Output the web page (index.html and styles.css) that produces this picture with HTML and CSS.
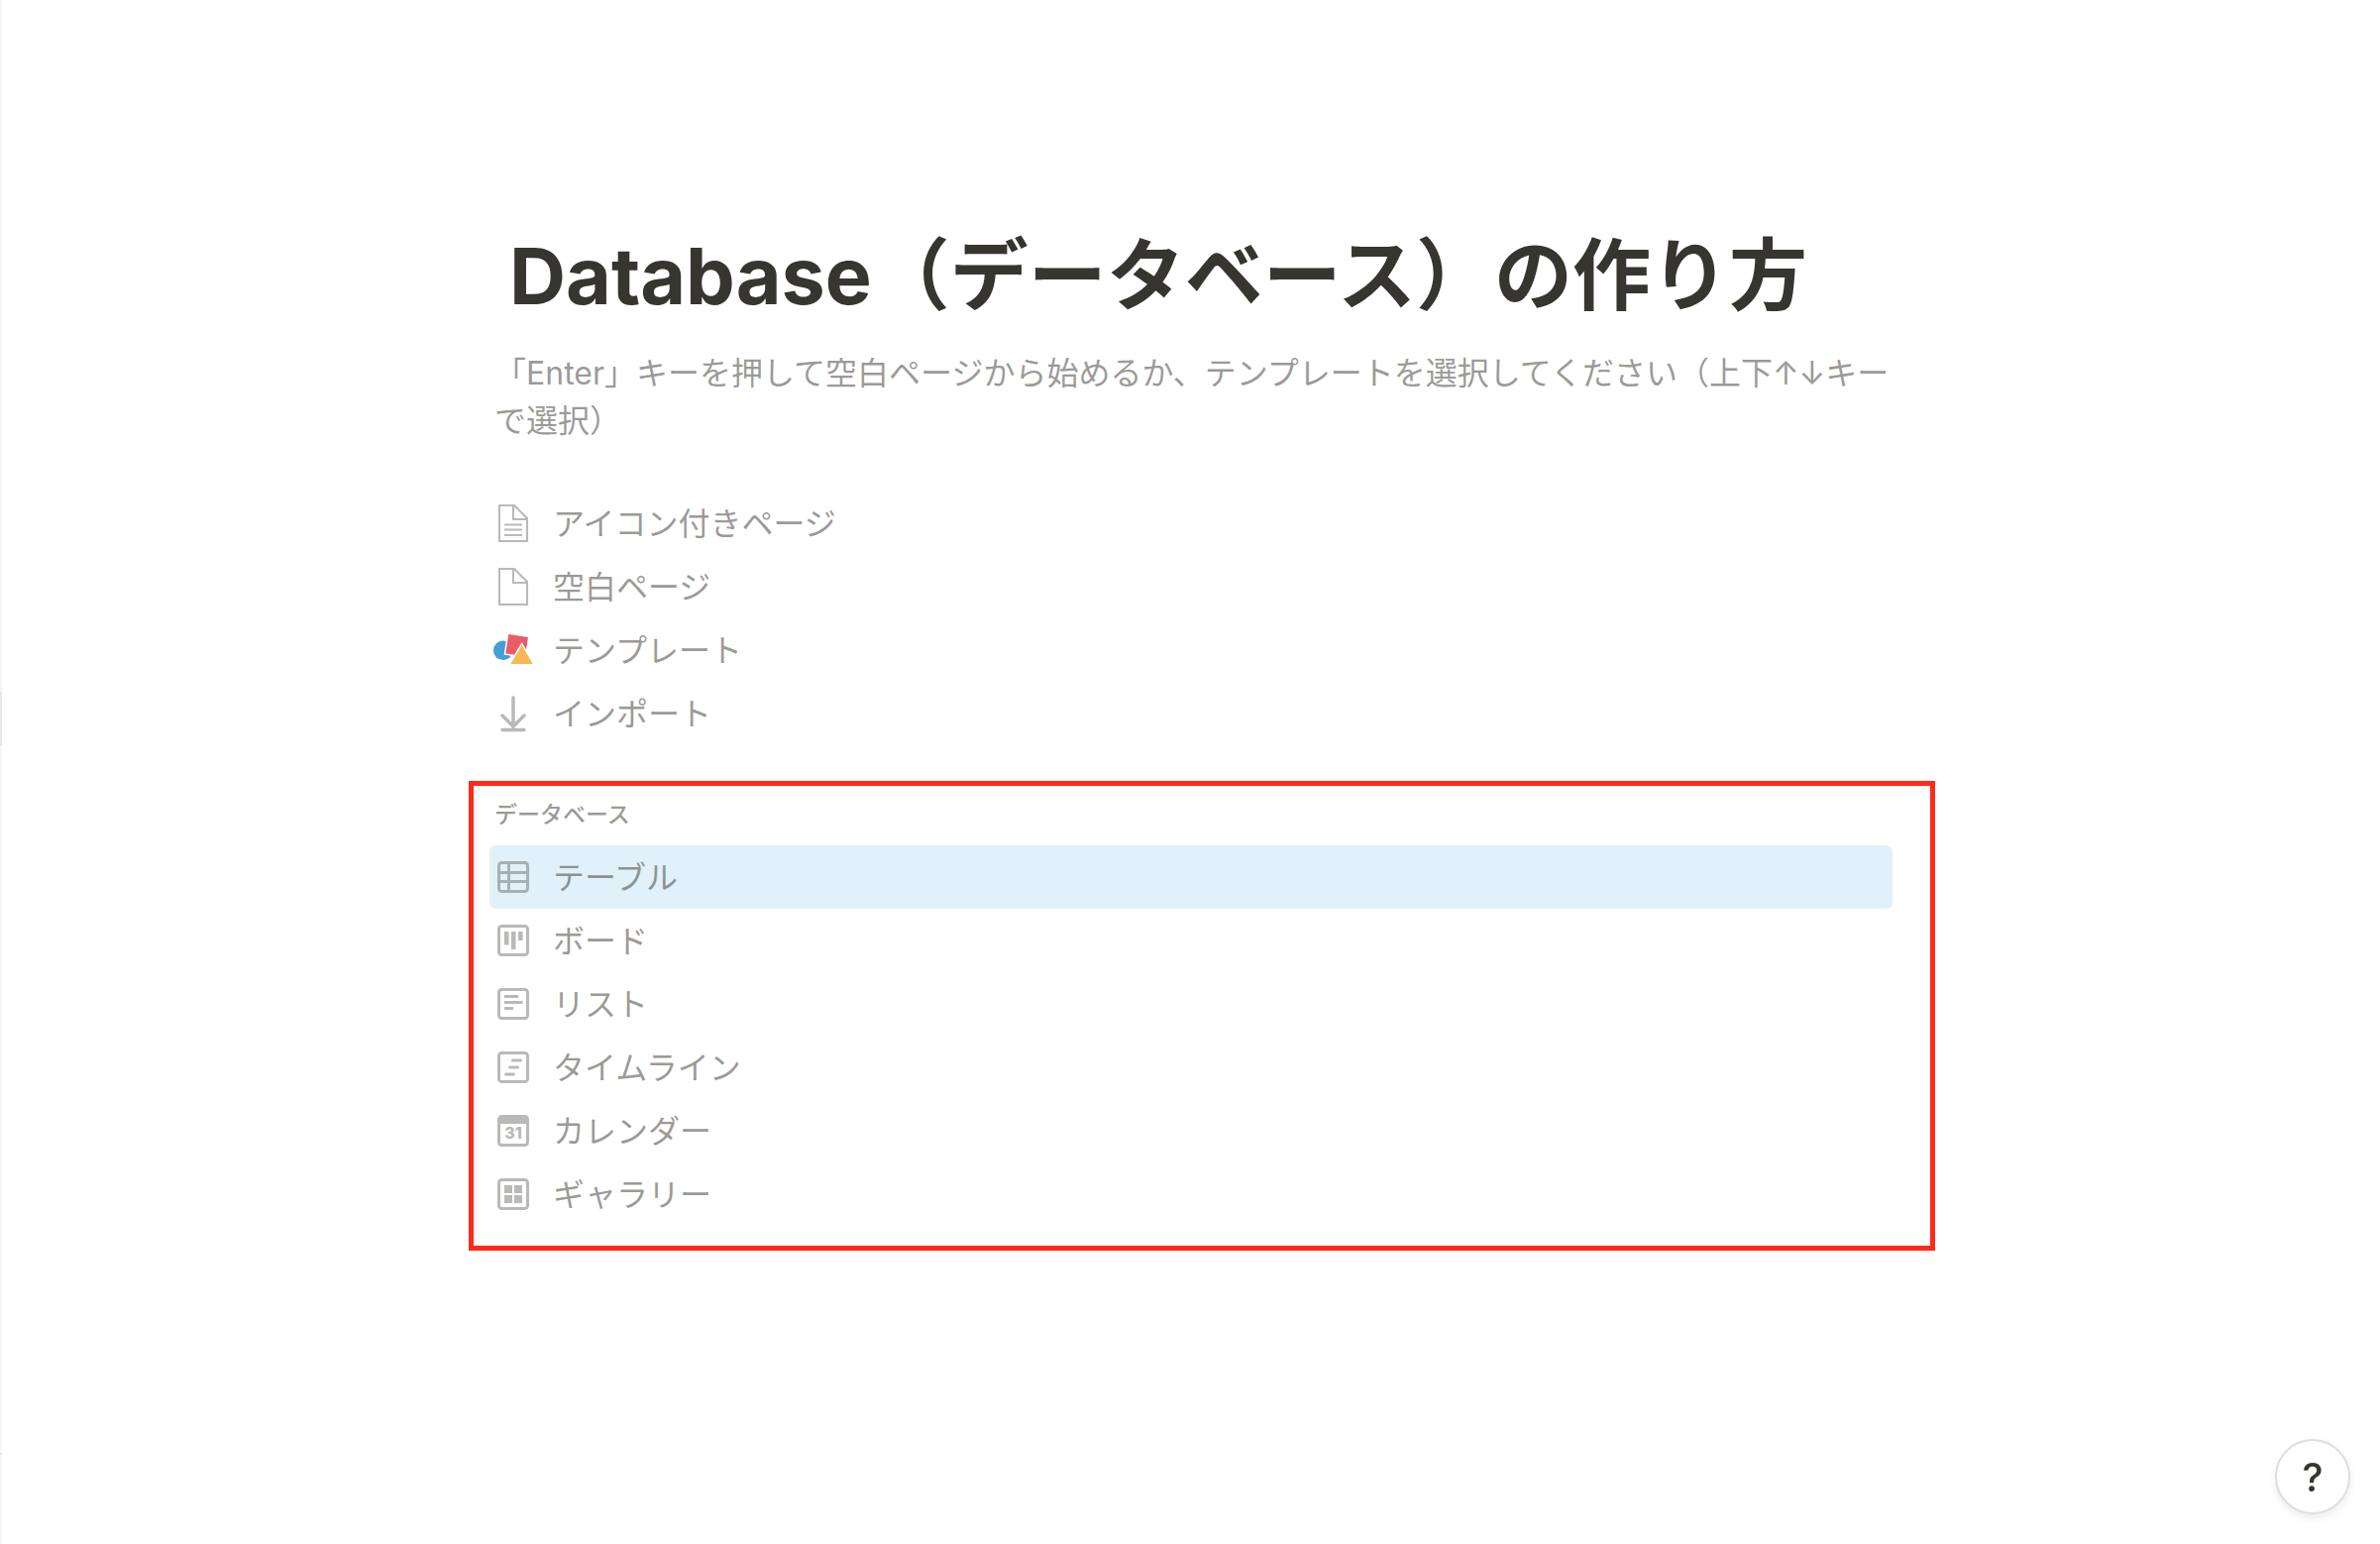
FILE: index.html
```html
<!DOCTYPE html>
<html lang="ja">
<head>
    <meta charset="UTF-8">
    <meta name="viewport" content="width=device-width, initial-scale=1.0">
    <title>Database（データベース）の作り方</title>
    <link rel="stylesheet" href="styles.css">
</head>
<body>
    <div class="app">
        <aside class="sidebar-edge">
            <div class="sidebar-item"></div>
            <div class="sidebar-line"></div>
        </aside>

        <main class="page">
            <h1 class="title">Database（データベース）の作り方</h1>
            <p class="hint">「Enter」キーを押して空白ページから始めるか、テンプレートを選択してください（上下↑↓キーで選択）</p>

            <!-- Page starters -->
            <div class="menu">
                <button class="row" type="button">
                    <svg class="icon" viewBox="0 0 32 32" fill="none" stroke="currentColor" stroke-width="2">
                        <path d="M2 -2H17L30 11V34H2Z"/>
                        <path d="M16 -2V12H30"/>
                        <path d="M7 17.500H25M7 22.500H25M7 28H25"/>
                    </svg>
                    <span class="row-text">アイコン付きページ</span>
                </button>
                <button class="row" type="button">
                    <svg class="icon" viewBox="0 0 32 32" fill="none" stroke="currentColor" stroke-width="2">
                        <path d="M2 -2H17L30 11V34H2Z"/>
                        <path d="M16 -2V12H30"/>
                    </svg>
                    <span class="row-text">空白ページ</span>
                </button>
                <button class="row" type="button">
                    <svg class="icon" viewBox="0 0 32 32">
                        <circle cx="5.700" cy="16.300" r="9.700" fill="#419fd9"/>
                        <path d="M11.300 0L31 3L28 22L8.300 19.500Z" fill="#fff" stroke="#fff" stroke-width="3"/>
                        <path d="M11.300 0L31 3L28 22L8.300 19.500Z" fill="#e95c67"/>
                        <path d="M24.700 11L35.700 30H13.300Z" fill="#fff" stroke="#fff" stroke-width="3"/>
                        <path d="M24.700 11L35.700 30H13.300Z" fill="#f5b956"/>
                    </svg>
                    <span class="row-text">テンプレート</span>
                </button>
                <button class="row" type="button">
                    <svg class="icon" viewBox="0 0 32 32" fill="none" stroke="currentColor" stroke-width="3.500" stroke-linecap="round">
                        <path d="M16 0V29M5 18L16 29L27 18M5 32.500H27"/>
                    </svg>
                    <span class="row-text">インポート</span>
                </button>
            </div>

            <!-- Database views -->
            <section class="database">
                <h2 class="label">データベース</h2>
                <button class="row selected" type="button">
                    <svg class="icon" viewBox="0 0 32 32" fill="none" stroke="currentColor" stroke-width="3">
                        <rect x="1.500" y="1.500" width="29" height="29" rx="3"/>
                        <path d="M11.500 2V30M2 11.500H30M2 20.500H30"/>
                    </svg>
                    <span class="row-text">テーブル</span>
                </button>
                <button class="row" type="button">
                    <svg class="icon" viewBox="0 0 32 32" fill="currentColor">
                        <rect x="1.500" y="1.500" width="29" height="29" rx="3" fill="none" stroke="currentColor" stroke-width="3"/>
                        <path d="M7 7H11.500V20.500H7ZM14 7H18.500V25H14ZM21 7H25.500V16H21Z"/>
                    </svg>
                    <span class="row-text">ボード</span>
                </button>
                <button class="row" type="button">
                    <svg class="icon" viewBox="0 0 32 32" fill="currentColor">
                        <rect x="1.500" y="1.500" width="29" height="29" rx="3" fill="none" stroke="currentColor" stroke-width="3"/>
                        <path d="M7 7H21V10H7ZM7 13H25.500V16H7ZM7 19H16V22H7Z"/>
                    </svg>
                    <span class="row-text">リスト</span>
                </button>
                <button class="row" type="button">
                    <svg class="icon" viewBox="0 0 32 32" fill="none" stroke="currentColor" stroke-width="3" stroke-linecap="round">
                        <rect x="1.500" y="1.500" width="29" height="29" rx="3"/>
                        <path d="M15.500 9H23.500M12.500 16H20.500M8.500 23H16.500"/>
                    </svg>
                    <span class="row-text">タイムライン</span>
                </button>
                <button class="row" type="button">
                    <svg class="icon" viewBox="0 0 32 32" fill="none" stroke="currentColor" stroke-width="3">
                        <rect x="1.500" y="1.500" width="29" height="29" rx="3"/>
                        <path d="M2 5.500H30" stroke-width="7"/>
                        <text class="icon-date" x="16" y="24" text-anchor="middle">31</text>
                    </svg>
                    <span class="row-text">カレンダー</span>
                </button>
                <button class="row" type="button">
                    <svg class="icon" viewBox="0 0 32 32" fill="currentColor">
                        <rect x="1.500" y="1.500" width="29" height="29" rx="3" fill="none" stroke="currentColor" stroke-width="3"/>
                        <path d="M7 7H15V15H7ZM17 7H25V15H17ZM7 17H15V25H7ZM17 17H25V25H17Z"/>
                    </svg>
                    <span class="row-text">ギャラリー</span>
                </button>
            </section>
        </main>
    </div>

    <button class="help" type="button" aria-label="ヘルプ">?</button>
</body>
</html>
```

FILE: styles.css
```css
/* General reset */
* {
    box-sizing: border-box;
}

body {
    margin: 0;
    background-color: #fff;
    color: #37352f;
    font-family: Inter, "Noto Sans CJK JP", sans-serif;
}

.app {
    display: flex;
    min-height: 100vh;
}

/* Edge of the sidebar */
.sidebar-edge {
    display: flex;
    flex-direction: column;
    justify-content: space-between;
    width: 2px;
    padding: 698px 0 90px;
    background-color: #f7f6f3;
}

.sidebar-item {
    height: 54px;
    background-color: #e8e7e4;
}

.sidebar-line {
    height: 2px;
    background-color: #e8e7e4;
}

/* Page */
.page {
    flex: 1;
    max-width: 1416px;
    margin: 0 auto;
    padding: 230px 0 64px;
}

.title {
    margin: 0 20px;
    font-size: 79px;
    font-weight: 700;
    line-height: 96px;
}

.hint {
    margin: 27px 0 47px 5px;
    color: rgba(55, 53, 47, 0.5);
    font-size: 32px;
    line-height: 48px;
}

/* Menu rows */
.row {
    display: flex;
    align-items: center;
    gap: 24px;
    width: 100%;
    height: 64px;
    padding: 0 8px;
    border: none;
    border-radius: 6px;
    background-color: transparent;
    color: rgba(55, 53, 47, 0.5);
    font-family: inherit;
    font-size: 32px;
    text-align: left;
    cursor: pointer;
}

.row-text {
    padding-bottom: 5px;
}

.selected {
    background-color: #e1f1f9;
}

.icon {
    flex: none;
    width: 32px;
    height: 32px;
    overflow: visible;
    color: #b9b9b7;
}

.selected .icon {
    color: #a6b1b4;
}

.icon-date {
    fill: currentColor;
    stroke: none;
    font-size: 16px;
    font-weight: 800;
}

/* Database box, wider than the column around it */
.database {
    margin: 36px -43px 0 -21px;
    padding: 13px 38px 20px 16px;
    border: 5px solid #ff2a1c;
}

.label {
    margin: 0 0 15px 5px;
    color: rgba(55, 53, 47, 0.5);
    font-size: 23px;
    font-weight: 500;
    line-height: 32px;
}

/* Help button */
.help {
    position: fixed;
    right: 30px;
    bottom: 30px;
    width: 76px;
    height: 76px;
    border: 2px solid #dededd;
    border-radius: 50%;
    background-color: #fff;
    box-shadow: 0 4px 8px rgba(15, 15, 15, 0.08);
    color: #37352f;
    font-family: inherit;
    font-size: 40px;
    font-weight: 500;
    cursor: pointer;
}
```
